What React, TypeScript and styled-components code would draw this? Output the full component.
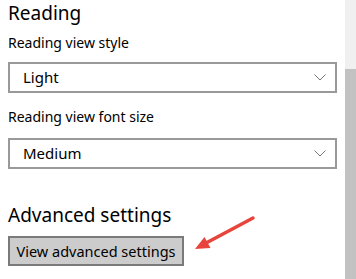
import React from "react";
import styled, { createGlobalStyle } from "styled-components";

const GlobalStyle = createGlobalStyle`
  html, body {
    margin: 0;
    padding: 0;
    background: #fff;
  }
  body {
    font-family: "Noto Sans", "Open Sans", Arial, sans-serif;
    color: #000;
  }
`;

const Page = styled.div`
  position: relative;
  width: 356px;
  height: 279px;
  display: flex;
  overflow: hidden;
`;

const Content = styled.div`
  flex: 1;
  display: flex;
  flex-direction: column;
  padding: 0 8px 0 8px;
`;

const Heading = styled.div<{ $top?: number }>`
  font-size: 19px;
  line-height: 26px;
  font-weight: 400;
  margin-top: ${(p) => p.$top ?? 0}px;
`;

const Label = styled.div<{ $top: number }>`
  font-size: 14px;
  line-height: 20px;
  margin-top: ${(p) => p.$top}px;
`;

const Select = styled.div<{ $top: number }>`
  margin-top: ${(p) => p.$top}px;
  height: 31px;
  box-sizing: border-box;
  border: 2px solid #999;
  display: flex;
  align-items: center;
  justify-content: space-between;
  padding: 0 9px 0 13px;
  font-size: 15px;
  line-height: 27px;
`;

const Button = styled.div`
  margin-top: 8px;
  align-self: flex-start;
  width: 176px;
  height: 30px;
  box-sizing: border-box;
  border: 2px solid #7a7a7a;
  background: #cccccc;
  font-size: 14.5px;
  line-height: 26px;
  text-align: center;
`;

const Scrollbar = styled.div`
  width: 11px;
  display: flex;
  flex-direction: column;
  background: #f0f0f0;
`;

const Thumb = styled.div`
  margin-top: 69px;
  flex: 1;
  background: #c2c2c2;
`;

const Arrow = styled.svg`
  position: absolute;
  left: 190px;
  top: 212px;
`;

const Chevron = () => (
  <svg width="12" height="7" viewBox="0 0 12 7">
    <polyline points="0.5,0.5 6,6 11.5,0.5" fill="none" stroke="#777" strokeWidth="1" />
  </svg>
);

export default function App() {
  return (
    <>
      <GlobalStyle />
      <Page>
        <Content>
          <Heading>Reading</Heading>
          <Label $top={7}>Reading view style</Label>
          <Select $top={9}>
            <span>Light</span>
            <Chevron />
          </Select>
          <Label $top={14}>Reading view font size</Label>
          <Select $top={11}>
            <span>Medium</span>
            <Chevron />
          </Select>
          <Heading $top={33}>Advanced settings</Heading>
          <Button>View advanced settings</Button>
        </Content>
        <Scrollbar>
          <Thumb />
        </Scrollbar>
        <Arrow width="70" height="45" viewBox="0 0 70 45">
          <line x1="63" y1="6" x2="17" y2="30.5" stroke="#e8443c" strokeWidth="3.5" strokeLinecap="round" />
          <polygon points="5,37 14.5,25 20.5,36" fill="#e8443c" />
        </Arrow>
      </Page>
    </>
  );
}
